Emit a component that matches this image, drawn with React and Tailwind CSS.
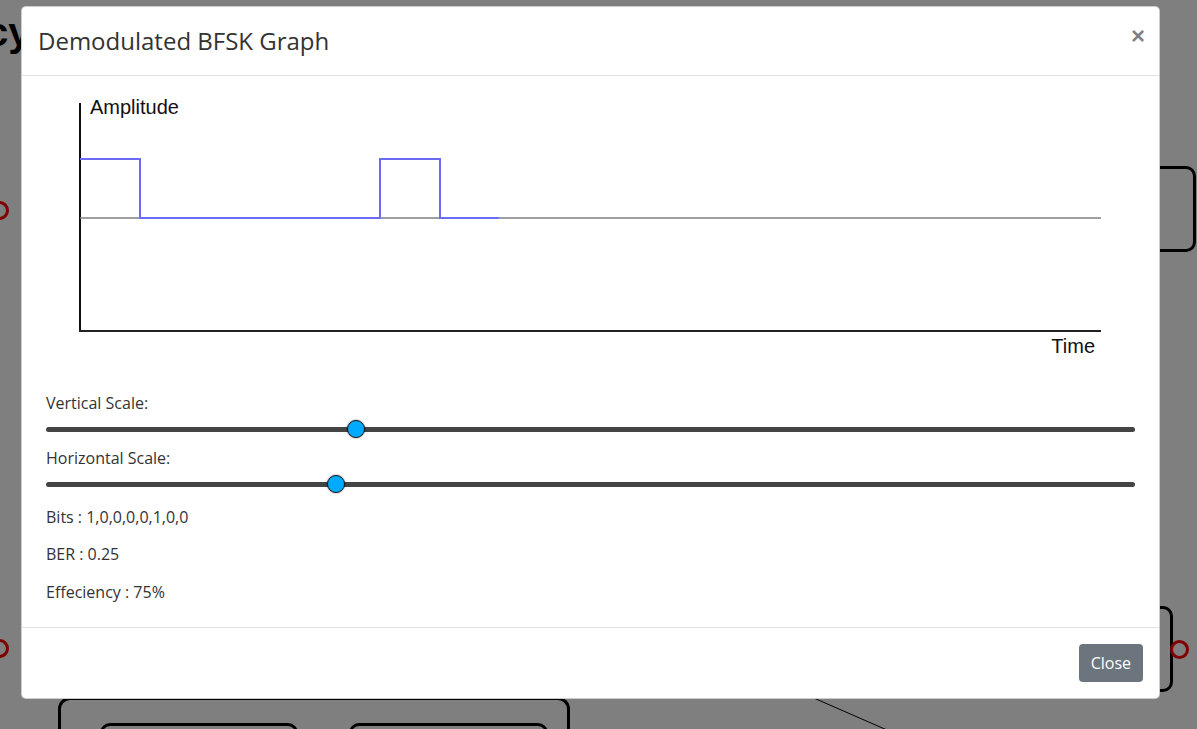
import React from "react";

const bits = [1, 0, 0, 0, 0, 1, 0, 0];

// slider drawn by hand: track + thumb sitting on it
const Scale = ({ label, offset }) => {
  return (
    <div>
      <div className="h-[22px] leading-[22px] text-[16px] text-[#333]">{label}</div>
      <div className="h-[30px] flex items-center">
        <div className="relative w-full h-[5px] rounded-full bg-[#444]">
          <div
            className="absolute top-1/2 w-[18px] h-[18px] -translate-x-1/2 -translate-y-1/2 rounded-full bg-[#00aaff] border border-[#1a1a1a] shadow-[0_0_2px_rgba(0,0,0,0.6)]"
            style={{ left: offset }}
          />
        </div>
      </div>
    </div>
  );
};

const Graph = () => {
  return (
    <svg width="1090" height="300" className="block">
      <line x1="34" y1="11" x2="34" y2="240" stroke="#111" strokeWidth="2" />
      <line x1="33" y1="239" x2="1055" y2="239" stroke="#222" strokeWidth="2" />
      <line x1="34" y1="126" x2="1055" y2="126" stroke="#808080" strokeWidth="1.5" />
      <path d="M34 67 H94 V126 H334 V67 H394 V126 H453" fill="none" stroke="#6b6bf5" strokeWidth="2" />
      <text x="44" y="22" fontFamily="'Liberation Sans', Arial, sans-serif" fontSize="20" fill="#111">
        Amplitude
      </text>
      <text x="1049" y="261" textAnchor="end" fontFamily="'Liberation Sans', Arial, sans-serif" fontSize="20" fill="#111">
        Time
      </text>
    </svg>
  );
};

const App = () => {
  return (
    <div className="relative w-full h-[729px] overflow-hidden bg-white font-['Liberation_Sans',Arial,sans-serif]">
      {/* diagram behind the modal */}
      <div className="absolute left-[-14px] top-[12px] text-[40px] leading-none font-bold text-black">cy</div>
      <div className="absolute left-[-10px] top-[201px] w-[19px] h-[19px] rounded-full border-[3px] border-[#ff0000]" />
      <div className="absolute left-[-10px] top-[639px] w-[19px] h-[19px] rounded-full border-[3px] border-[#ff0000]" />
      <div className="absolute left-[1100px] top-[166px] w-[96px] h-[86px] rounded-[10px] border-[3px] border-black" />
      <div className="absolute left-[1080px] top-[606px] w-[93px] h-[86px] rounded-[10px] border-[3px] border-black" />
      <div className="absolute left-[1170px] top-[640px] w-[19px] h-[19px] rounded-full border-[3px] border-[#ff0000] bg-white" />
      <div className="absolute left-[58px] top-[697px] w-[512px] h-[80px] rounded-[12px] border-[3px] border-black" />
      <div className="absolute left-[100px] top-[723px] w-[198px] h-[40px] rounded-[10px] border-[3px] border-black" />
      <div className="absolute left-[349px] top-[723px] w-[199px] h-[40px] rounded-[10px] border-[3px] border-black" />
      <svg className="absolute left-0 top-0" width="1197" height="729">
        <line x1="800" y1="692" x2="887" y2="730" stroke="#000" strokeWidth="1" />
      </svg>

      {/* backdrop */}
      <div className="absolute inset-0 bg-black/50">
        <div className="ml-[21px] mt-[6px] w-[1139px] bg-white rounded-[5px] border border-black/20 font-['Open_Sans',sans-serif] text-[#333]">
          <div className="flex items-start justify-between px-4 py-4 border-b border-[#dee2e6]">
            <h4 className="text-[24px] leading-[36px] font-normal">Demodulated BFSK Graph</h4>
            <button className="mt-[1px] mr-[-2px] text-[24px] leading-none font-bold text-black/50 font-['Liberation_Sans',Arial,sans-serif]">
              ×
            </button>
          </div>

          <div className="px-6 pt-4 pb-6">
            <Graph />
            <Scale label="Vertical Scale:" offset={310} />
            <div className="mt-[3px]">
              <Scale label="Horizontal Scale:" offset={290} />
            </div>
            <p className="mt-[7px] h-[22px] leading-[22px] text-[16px]">Bits : {bits.join(",")}</p>
            <p className="mt-[15px] h-[22px] leading-[22px] text-[16px]">BER : 0.25</p>
            <p className="mt-[16px] h-[22px] leading-[22px] text-[16px]">Effeciency : 75%</p>
          </div>

          <div className="flex justify-end px-4 py-4 border-t border-[#dee2e6]">
            <button className="h-[38px] px-3 rounded-[4px] bg-[#6c757d] text-white text-[16px] leading-[24px]">
              Close
            </button>
          </div>
        </div>
      </div>
    </div>
  );
};

export default App;
